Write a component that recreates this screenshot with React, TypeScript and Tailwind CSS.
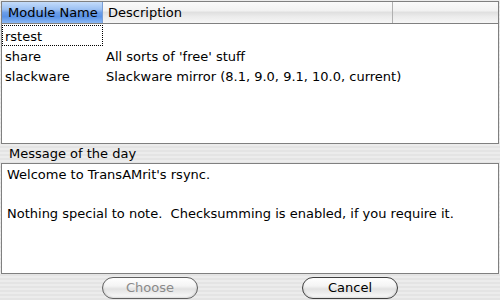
import React from "react";

const rows = [
  { name: "rstest", desc: "" },
  { name: "share", desc: "All sorts of 'free' stuff" },
  { name: "slackware", desc: "Slackware mirror (8.1, 9.0, 9.1, 10.0, current)" },
];

export default function App() {
  return (
    <div
      className="w-[500px] h-[300px] flex flex-col bg-[repeating-linear-gradient(to_bottom,#ececec_0px,#ececec_2px,#e4e4e4_2px,#e4e4e4_4px)] text-[13px] text-black overflow-hidden"
      style={{ fontFamily: '"DejaVu Sans", sans-serif' }}
    >
      {/* table */}
      <div className="mt-[1px] mx-[1px] h-[143px] border border-[#808080] bg-white flex flex-col">
        <div className="flex h-[22px] border-b border-[#808080] shrink-0">
          <div className="w-[101px] flex items-center pl-[6px] bg-[linear-gradient(to_bottom,#c4dcfa_0%,#9cc0f2_35%,#6c9ee8_50%,#5a92e6_70%,#8ab8f4_100%)] border-r border-[#7a9fd6]">
            Module Name
          </div>
          <div className="w-[290px] flex items-center pl-[5px] bg-[linear-gradient(to_bottom,#fafafa_0%,#f2f2f2_40%,#e0e0e0_50%,#ececec_70%,#f6f6f6_100%)] border-r border-[#b0b0b0]">
            Description
          </div>
          <div className="flex-1 bg-[linear-gradient(to_bottom,#fafafa_0%,#f2f2f2_40%,#e0e0e0_50%,#ececec_70%,#f6f6f6_100%)]" />
        </div>
        <div className="flex flex-col pt-[1px]">
          {rows.map((r, i) => (
            <div key={r.name} className={`flex items-center ${i === 0 ? "h-[21px]" : "h-[20px]"}`}>
              <div
                className={`w-[101px] h-full flex items-center pl-[2px] pt-[2px] ${
                  i === 0 ? "border border-dotted border-black" : "border border-transparent"
                }`}
              >
                {r.name}
              </div>
              <div className="pl-[3px] pt-[2px]">{r.desc}</div>
            </div>
          ))}
        </div>
      </div>

      {/* label */}
      <div className="h-[19px] flex items-center pl-[9px] shrink-0">Message of the day</div>

      {/* message box */}
      <div className="mx-[1px] h-[111px] border border-[#808080] bg-white px-[5px] pt-[1px] leading-[19.5px] shrink-0">
        <div>Welcome to TransAMrit's rsync.</div>
        <div>&nbsp;</div>
        <div>Nothing special to note.&nbsp; Checksumming is enabled, if you require it.</div>
      </div>

      {/* buttons */}
      <div className="flex justify-center gap-[104px] mt-[3px]">
        <button className="w-[96px] h-[22px] rounded-full border border-[#606060] bg-[linear-gradient(to_bottom,#ffffff_0%,#f4f4f4_40%,#e2e2e2_55%,#f0f0f0_80%,#ffffff_100%)] text-[#8a8a8a] text-[13px] flex items-center justify-center shadow-[inset_0_-1px_2px_rgba(0,0,0,0.15)]">
          Choose
        </button>
        <button className="w-[96px] h-[22px] rounded-full border border-[#404040] bg-[linear-gradient(to_bottom,#ffffff_0%,#f4f4f4_40%,#e2e2e2_55%,#f0f0f0_80%,#ffffff_100%)] text-black text-[13px] flex items-center justify-center shadow-[inset_0_-1px_2px_rgba(0,0,0,0.15)]">
          Cancel
        </button>
      </div>
    </div>
  );
}
